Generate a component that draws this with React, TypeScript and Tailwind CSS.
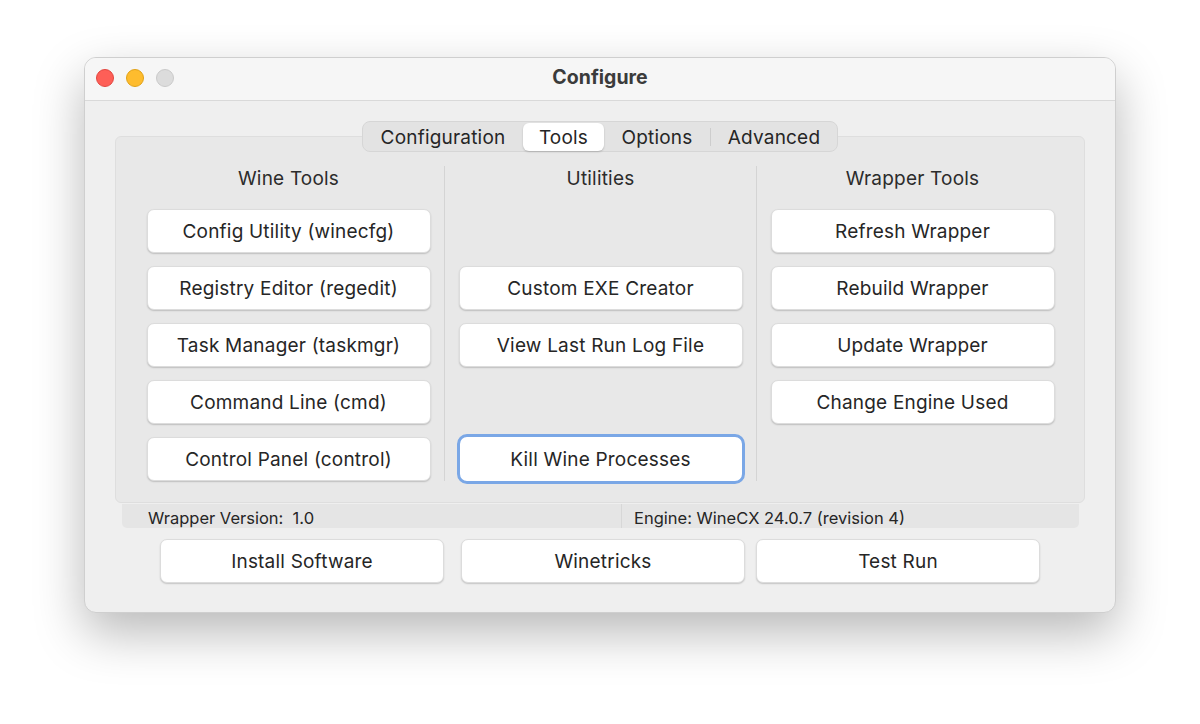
import React from "react";

const font = { fontFamily: "Inter, 'Noto Sans', 'Liberation Sans', sans-serif" };

function Btn({ label, focused = false }: { label: string; focused?: boolean }) {
  if (focused) {
    return (
      <div className="w-[288px] h-[50px] -mx-[2px] -my-[3px] pt-[3px] rounded-[10px] border-[3px] border-[#7aa7e6] bg-white flex items-center justify-center text-[19px] tracking-[0.2px] text-[#262626]">
        {label}
      </div>
    );
  }
  return (
    <div className="w-[284px] h-[44px] pt-[3px] rounded-[7px] bg-white border border-[#dcdcdc] shadow-[0_1px_1.5px_rgba(0,0,0,0.18)] flex items-center justify-center text-[19px] tracking-[0.2px] text-[#262626]">
      {label}
    </div>
  );
}

function Column({
  title,
  items,
  className,
}: {
  title: string;
  items: (string | null | { label: string; focused: boolean })[];
  className: string;
}) {
  return (
    <div className={`flex flex-col items-center ${className}`}>
      <div className="h-[22px] mt-[31px] text-[19px] tracking-[0.2px] leading-[22px] text-[#2c2c2c]">{title}</div>
      <div className="mt-[19px] flex flex-col gap-[13px]">
        {items.map((it, i) => {
          if (it === null) return <div key={i} className="w-[284px] h-[44px]" />;
          if (typeof it === "string") return <Btn key={i} label={it} />;
          return <Btn key={i} label={it.label} focused={it.focused} />;
        })}
      </div>
    </div>
  );
}

export default function App() {
  return (
    <div className="w-[1200px] h-[724px] bg-white pt-[57px] pl-[84px]" style={font}>
      <div className="w-[1032px] h-[556px] rounded-[12px] bg-[#efefef] border border-[#cfcfcf] shadow-[0_20px_50px_rgba(0,0,0,0.28)] flex flex-col overflow-hidden">
        {/* title bar */}
        <div className="h-[43px] shrink-0 bg-[#f6f6f6] border-b border-[#d9d9d9] flex items-center relative pb-[3px]">
          <div className="flex items-center gap-[12px] pl-[11px]">
            <span className="w-[18px] h-[18px] rounded-full bg-[#fe5f57] border border-[#e2463f]" />
            <span className="w-[18px] h-[18px] rounded-full bg-[#febc2e] border border-[#e1a116]" />
            <span className="w-[18px] h-[18px] rounded-full bg-[#dcdcdc] border border-[#c9c9c9]" />
          </div>
          <div className="absolute inset-0 pb-[3px] flex items-center justify-center text-[19.5px] font-bold text-[#3b3b3b] pointer-events-none">
            Configure
          </div>
        </div>

        {/* tab view */}
        <div className="flex flex-col items-center mt-[20px] px-[30px]">
          <div className="relative z-10 h-[31px] w-[476px] rounded-[8px] bg-[#e3e3e3] border border-[#d6d6d6] flex items-center text-[19px] tracking-[0.2px] text-[#262626]">
            <div className="w-[160px] text-center pt-[3px]">Configuration</div>
            <div className="w-[81px] h-[28px] pt-[3px] rounded-[6px] bg-white shadow-[0_1px_2px_rgba(0,0,0,0.2)] flex items-center justify-center">
              Tools
            </div>
            <div className="w-[106px] text-center pt-[3px]">Options</div>
            <div className="w-px h-[18px] bg-[#cdcdcd]" />
            <div className="flex-1 text-center pt-[3px]">Advanced</div>
          </div>
          <div className="-mt-[16px] w-[970px] h-[367px] rounded-[6px] bg-[#e8e8e8] border border-[#dedede] flex">
            <Column
              title="Wine Tools"
              className="w-[328px] pl-[17px]"
              items={[
                "Config Utility (winecfg)",
                "Registry Editor (regedit)",
                "Task Manager (taskmgr)",
                "Command Line (cmd)",
                "Control Panel (control)",
              ]}
            />
            <div className="w-px bg-[#d4d4d4] mt-[29px] mb-[21px]" />
            <Column
              title="Utilities"
              className="w-[311px]"
              items={[
                null,
                "Custom EXE Creator",
                "View Last Run Log File",
                null,
                { label: "Kill Wine Processes", focused: true },
              ]}
            />
            <div className="w-px bg-[#d4d4d4] mt-[29px] mb-[21px]" />
            <Column
              title="Wrapper Tools"
              className="flex-1 pr-[16px]"
              items={[
                "Refresh Wrapper",
                "Rebuild Wrapper",
                "Update Wrapper",
                "Change Engine Used",
                null,
              ]}
            />
          </div>
        </div>

        {/* status bar */}
        <div className="mt-[1px] ml-[37px] w-[957px] h-[24px] flex text-[16.5px] text-[#262626]">
          <div className="w-[500px] h-full bg-[#e5e5e5] rounded-bl-[5px] border-r border-[#d7d7d7] flex items-center pt-[4px] pl-[26px] whitespace-pre">
            {"Wrapper Version:  1.0"}
          </div>
          <div className="flex-1 h-full bg-[#e5e5e5] rounded-br-[5px] flex items-center pt-[4px] pl-[12px]">
            Engine: WineCX 24.0.7 (revision 4)
          </div>
        </div>

        {/* action buttons */}
        <div className="mt-[11px] pl-[75px] flex">
          <Btn label="Install Software" />
          <div className="ml-[17px]">
            <Btn label="Winetricks" />
          </div>
          <div className="ml-[11px]">
            <Btn label="Test Run" />
          </div>
        </div>
      </div>
    </div>
  );
}
